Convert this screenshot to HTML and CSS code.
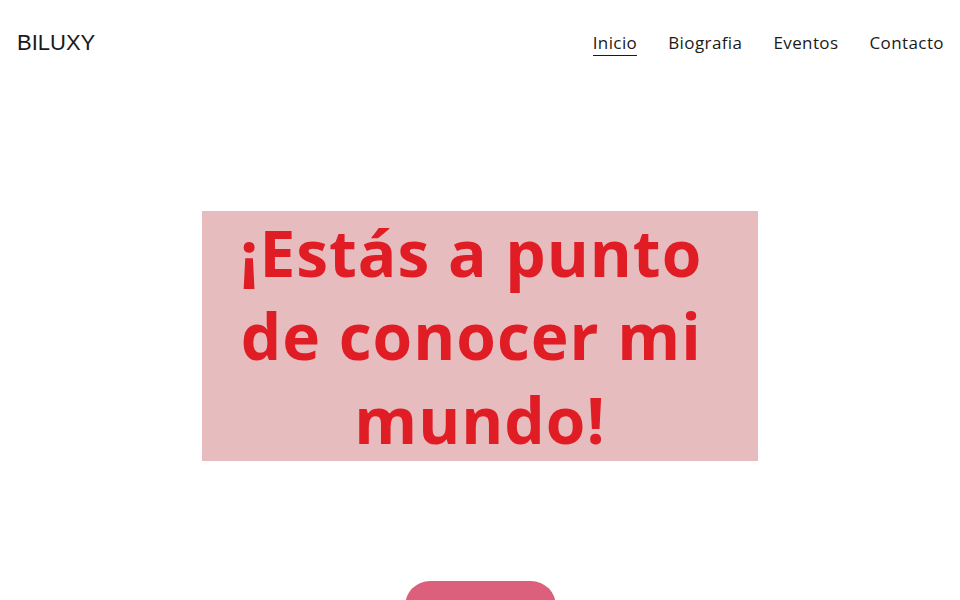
FILE: index.html
```html
<!DOCTYPE html>
<html lang="es">
<head>
<meta charset="UTF-8">
<meta name="viewport" content="width=device-width, initial-scale=1.0">
<title>Biluxy</title>
<link rel="stylesheet" href="styles.css">
</head>
<body>
<header class="header">
  <a class="logo" href="#">BILUXY</a>
  <nav class="nav">
    <a class="nav-link active" href="#">Inicio</a>
    <a class="nav-link" href="#">Biografia</a>
    <a class="nav-link" href="#">Eventos</a>
    <a class="nav-link" href="#">Contacto</a>
  </nav>
</header>

<main class="hero">
  <div class="hero-box">
    <h1 class="hero-title">¡Estás a punto&nbsp;<br>de conocer mi&nbsp;<br>mundo!</h1>
  </div>
  <a class="hero-btn" href="#" aria-label="Descubre"></a>
</main>
</body>
</html>
```

FILE: styles.css
```css
body {
  margin: 0;
  background: #fff;
  font-family: "Open Sans", Arial, sans-serif;
  color: #222;
  overflow: hidden;
}

a {
  text-decoration: none;
  color: inherit;
}

.header {
  display: flex;
  justify-content: space-between;
  align-items: center;
  height: 86px;
  padding: 0 16px 0 17px;
}

.logo {
  font-family: "Liberation Sans", Arial, sans-serif;
  font-size: 22px;
  color: #1a1a1a;
}

.nav {
  display: flex;
  gap: 31px;
}

.nav-link {
  font-size: 17px;
  letter-spacing: 0.4px;
  color: #1a1a1a;
  padding-bottom: 1px;
  border-bottom: 1px solid transparent;
}

.nav-link.active {
  border-bottom-color: #1a1a1a;
}

.hero {
  display: flex;
  flex-direction: column;
  align-items: center;
  padding-top: 125px;
}

.hero-box {
  width: 556px;
  height: 250px;
  background: #e6bcbe;
  display: flex;
  justify-content: center;
  align-items: center;
}

.hero-title {
  margin: 0;
  font-size: 64px;
  line-height: 1.3;
  font-weight: 700;
  letter-spacing: 1px;
  color: #e01c24;
  text-align: center;
  white-space: nowrap;
}

.hero-btn {
  display: block;
  margin-top: 120px;
  width: 151px;
  height: 50px;
  border-radius: 25px;
  background: #dc607b;
}
```
